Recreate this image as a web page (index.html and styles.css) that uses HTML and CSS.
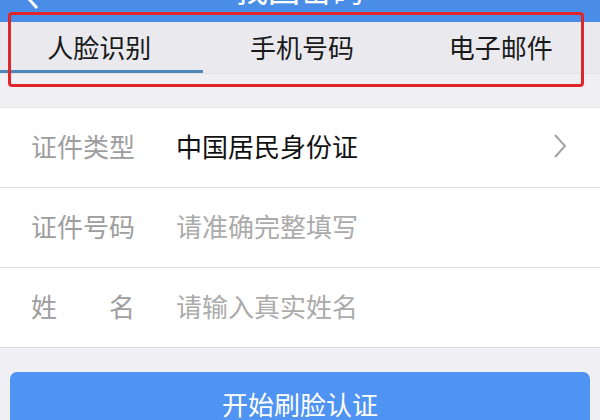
FILE: index.html
```html
<!DOCTYPE html>
<html lang="zh-CN">
<head>
<meta charset="utf-8">
<link rel="stylesheet" href="styles.css">
</head>
<body>
<div class="page">
  <header class="nav">
    <svg class="back" width="16" height="22" viewBox="0 0 16 22"><polyline points="13,-12 4,-2 13,8" fill="none" stroke="#fff" stroke-width="3"/></svg>
    <div class="title">找回密码</div>
  </header>
  <nav class="tabs">
    <div class="tab active">人脸识别</div>
    <div class="tab">手机号码</div>
    <div class="tab">电子邮件</div>
  </nav>
  <div class="gap"></div>
  <section class="form">
    <div class="row">
      <div class="label">证件类型</div>
      <div class="value">中国居民身份证</div>
      <svg class="chev" width="14" height="24" viewBox="0 0 14 24"><polyline points="2,1 12,12 2,23" fill="none" stroke="#a3a3a3" stroke-width="2"/></svg>
    </div>
    <div class="row">
      <div class="label">证件号码</div>
      <div class="value placeholder">请准确完整填写</div>
    </div>
    <div class="row">
      <div class="label split"><span>姓</span><span>名</span></div>
      <div class="value placeholder">请输入真实姓名</div>
    </div>
  </section>
  <div class="actions">
    <button class="btn">开始刷脸认证</button>
  </div>
  <div class="annot"></div>
</div>
</body>
</html>
```
FILE: styles.css
```css
html, body {
  margin: 0;
  padding: 0;
}
body {
  background: #efeff4;
  font-family: "Noto Sans CJK SC", "Noto Sans", sans-serif;
  width: 600px;
  height: 420px;
  overflow: hidden;
}
.page {
  position: relative;
  width: 600px;
  height: 420px;
  overflow: hidden;
}
.nav {
  height: 22px;
  background: #4a8de6;
  display: flex;
  align-items: flex-end;
  justify-content: center;
  position: relative;
  overflow: hidden;
}
.back {
  position: absolute;
  left: 24px;
  top: 0;
}
.title {
  color: #fff;
  font-size: 32px;
  line-height: 32px;
  margin-bottom: 18px;
}
.tabs {
  display: flex;
  height: 51px;
  background: #e9e9ee;
  border-bottom: 1px solid #e2e2e6;
}
.tab {
  flex: 1;
  display: flex;
  align-items: center;
  justify-content: center;
  font-size: 26px;
  color: #1a1a1a;
  box-sizing: border-box;
  padding-bottom: 2px;
}
.tab.active {
  border-bottom: 3px solid #4f86b8;
  padding-bottom: 0;
  padding-right: 4px;
}
.gap {
  height: 33px;
}
.form {
  background: #fff;
  border-top: 1px solid #e4e4e8;
  border-bottom: 1px solid #dcdcdf;
}
.row {
  height: 79px;
  display: flex;
  align-items: center;
  padding: 0 32px 4px 31px;
  font-size: 26px;
  box-sizing: border-box;
}
.row + .row {
  border-top: 1px solid #dedede;
  height: 80px;
}
.label {
  width: 145px;
  color: #9e9e9e;
  flex: none;
}
.label.split {
  display: flex;
  justify-content: space-between;
  width: 104px;
  margin-right: 41px;
}
.value {
  flex: 1;
  color: #111;
}
.value.placeholder {
  color: #ababab;
}
.chev {
  flex: none;
  margin-right: 1px;
}
.actions {
  padding: 24px 10px 0 10px;
}
.btn {
  display: block;
  width: 100%;
  height: 62px;
  border: none;
  border-radius: 7px;
  background: #4f93f3;
  color: #fff;
  font-family: "Noto Sans CJK SC", "Noto Sans", sans-serif;
  font-size: 26px;
  padding: 0;
}
.annot {
  position: absolute;
  left: 8px;
  top: 12px;
  width: 570px;
  height: 69px;
  border: 3px solid #e0262b;
  border-radius: 4px;
}
```
